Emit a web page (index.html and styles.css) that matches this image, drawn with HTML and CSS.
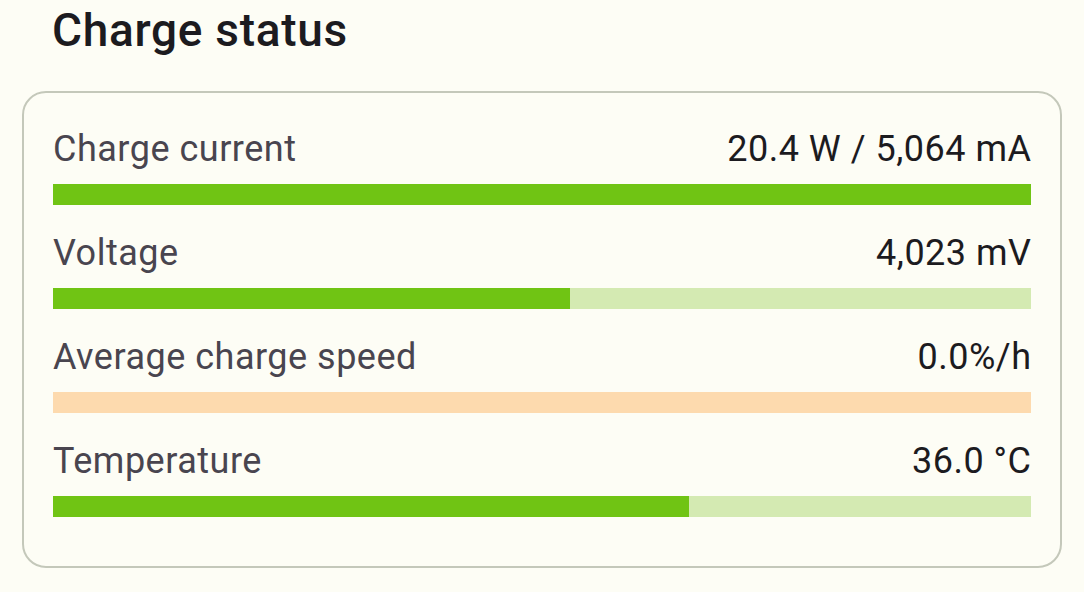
FILE: index.html
```html
<!DOCTYPE html>
<html lang="en">
<head>
<meta charset="utf-8">
<title>Charge status</title>
<link rel="stylesheet" href="styles.css">
</head>
<body>
<main class="page">
  <h1 class="title">Charge status</h1>
  <section class="card">
    <div class="row">
      <div class="row-head">
        <span class="label">Charge current</span>
        <span class="value">20.4 W / 5,064 mA</span>
      </div>
      <div class="bar bar-green"><div class="fill fill-green" style="width:100%"></div></div>
    </div>
    <div class="row">
      <div class="row-head">
        <span class="label">Voltage</span>
        <span class="value">4,023 mV</span>
      </div>
      <div class="bar bar-green"><div class="fill fill-green" style="width:52.9%"></div></div>
    </div>
    <div class="row">
      <div class="row-head">
        <span class="label">Average charge speed</span>
        <span class="value">0.0%/h</span>
      </div>
      <div class="bar bar-orange"><div class="fill fill-orange" style="width:0%"></div></div>
    </div>
    <div class="row">
      <div class="row-head">
        <span class="label">Temperature</span>
        <span class="value">36.0 °C</span>
      </div>
      <div class="bar bar-green"><div class="fill fill-green" style="width:65%"></div></div>
    </div>
  </section>
</main>
</body>
</html>
```

FILE: styles.css
```css
html, body {
  margin: 0;
  padding: 0;
  background: #fdfdf5;
}

body {
  font-family: Roboto, "Noto Sans", "Liberation Sans", sans-serif;
  color: #1c1b1f;
}

.page {
  padding: 3px 22px 0 22px;
}

.title {
  margin: 0 0 34px 30px;
  font-size: 46px;
  font-weight: 500;
  line-height: 54px;
  letter-spacing: 0.7px;
  color: #1c1b1f;
}

.card {
  border: 2px solid #c4c8ba;
  border-radius: 24px;
  padding: 35px 29px 22px 29px;
  display: flex;
  flex-direction: column;
}

.row {
  display: flex;
  flex-direction: column;
  gap: 14px;
  margin-bottom: 27px;
}

.row-head {
  display: flex;
  justify-content: space-between;
  align-items: baseline;
  font-size: 36px;
  line-height: 42px;
  letter-spacing: 0.5px;
}

.label {
  color: #49454f;
}

.value {
  color: #1c1b1f;
  margin-right: -0.5px;
}

.bar {
  height: 21px;
  display: flex;
}

.bar-green {
  background: #d4eab2;
}

.bar-orange {
  background: #fddaae;
}

.fill {
  height: 100%;
}

.fill-green {
  background: #70c414;
}

.fill-orange {
  background: #f08c00;
}
```
